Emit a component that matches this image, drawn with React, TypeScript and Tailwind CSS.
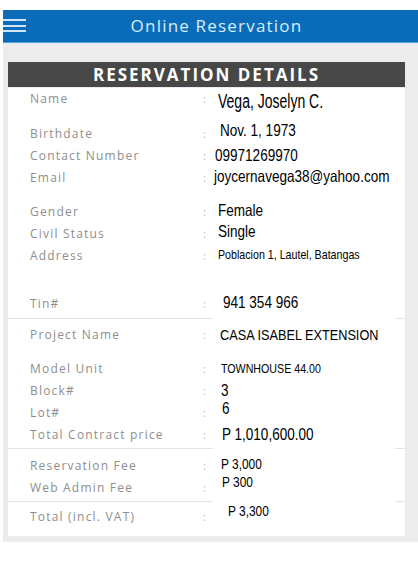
import React from "react";

type Row = {
  label: string;
  value: string;
  rowCls: string;
  valCls: string;
};

const Label = ({ children }: { children: React.ReactNode }) => (
  <div className="w-[195px] shrink-0 pl-[22px] text-[12px] tracking-[1.2px] text-[#8e8e8e] font-['Open_Sans',sans-serif] whitespace-nowrap">
    {children}
  </div>
);

const Colon = () => (
  <div className="w-[14px] shrink-0 text-[11px] text-[#b5b5b5] font-['Open_Sans',sans-serif]">:</div>
);

const Divider = ({ cls }: { cls: string }) => (
  <div className={"flex h-px " + cls}>
    <div className="w-[205px] bg-[#e4e4e4]" />
    <div className="flex-1" />
    <div className="w-[10px] bg-[#e4e4e4]" />
  </div>
);

function FieldRow({ r }: { r: Row }) {
  return (
    <div className={"flex items-center h-[22px] " + r.rowCls}>
      <Label>{r.label}</Label>
      <Colon />
      <div className={"whitespace-nowrap text-black font-['Liberation_Sans',Arial,sans-serif] " + r.valCls}>
        <span className="inline-block origin-left scale-x-[0.82]">{r.value}</span>
      </div>
    </div>
  );
}

export default function App() {
  const personal: Row[] = [
    { label: "Birthdate", value: "Nov. 1, 1973", rowCls: "mt-[13px]", valCls: "ml-[3px] text-[16.5px] mb-[8px]" },
    { label: "Contact Number", value: "09971269970", rowCls: "", valCls: "ml-[-2px] text-[16.5px] mb-[2px]" },
    { label: "Email", value: "joycernavega38@yahoo.com", rowCls: "", valCls: "ml-[-3px] text-[16.5px] mb-[4px]" },
    { label: "Gender", value: "Female", rowCls: "mt-[12px]", valCls: "ml-[1px] text-[16.5px] mb-[4px]" },
    { label: "Civil Status", value: "Single", rowCls: "", valCls: "ml-[1px] text-[16.5px] mb-[6px]" },
    { label: "Address", value: "Poblacion 1, Lautel, Batangas", rowCls: "", valCls: "ml-[1px] text-[13px] mb-[2px]" },
    { label: "Tin#", value: "941 354 966", rowCls: "mt-[26px]", valCls: "ml-[6px] text-[16.5px] mb-[4px]" },
  ];
  const project: Row[] = [
    { label: "Project Name", value: "CASA ISABEL EXTENSION", rowCls: "mt-[5px]", valCls: "ml-[3px] text-[15.5px]" },
    { label: "Model Unit", value: "TOWNHOUSE 44.00", rowCls: "mt-[12px]", valCls: "ml-[4px] text-[13px]" },
    { label: "Block#", value: "3", rowCls: "", valCls: "ml-[4px] text-[16.5px] mb-[2px]" },
    { label: "Lot#", value: "6", rowCls: "", valCls: "ml-[5px] text-[16.5px] mb-[10px]" },
    { label: "Total Contract price", value: "P 1,010,600.00", rowCls: "", valCls: "ml-[5px] text-[16.5px] mb-[2px]" },
  ];
  const fees: Row[] = [
    { label: "Reservation Fee", value: "P 3,000", rowCls: "mt-[6px]", valCls: "ml-[4px] text-[14.5px] mb-[2px]" },
    { label: "Web Admin Fee", value: "P 300", rowCls: "", valCls: "ml-[5px] text-[14.5px] mb-[10px]" },
  ];
  const total: Row = {
    label: "Total (incl. VAT)",
    value: "P 3,300",
    rowCls: "mt-[4px]",
    valCls: "ml-[11px] text-[14.5px] mb-[10px]",
  };

  return (
    <div className="w-[418px] h-[567px] bg-white pt-[10px] overflow-hidden">
      <div className="ml-[3px] h-[33px] bg-[#0a6cb9] border-b border-[#4da3dd] flex items-center relative">
        <div className="absolute left-0 top-[9px] w-[23px] flex flex-col gap-[3.5px]">
          <div className="h-[2px] bg-[#cfe6f6]" />
          <div className="h-[2px] bg-[#cfe6f6]" />
          <div className="h-[2px] bg-[#cfe6f6]" />
        </div>
        <div className="flex-1 text-center pl-[12px] text-[17px] tracking-[1.2px] text-[#d9ecfa] font-['Open_Sans',sans-serif]">
          Online Reservation
        </div>
      </div>
      <div className="ml-[3px] bg-[#ececec] pt-[19px] pl-[5px] pr-[13px] pb-[6px]">
        <div className="h-[25px] bg-[#474747] flex items-center justify-center text-white font-bold text-[17px] tracking-[2px] font-['Open_Sans',sans-serif]">
          RESERVATION DETAILS
        </div>
        <div className="bg-white pb-[8px]">
          <div className="flex items-center h-[22px] mt-px">
            <Label>Name</Label>
            <Colon />
            <div className="whitespace-nowrap text-black font-['Liberation_Sans',Arial,sans-serif] ml-[1px] -mb-[4px] text-[20px]">
              <span className="inline-block origin-left scale-x-[0.7]">Vega, Joselyn C.</span>
            </div>
          </div>
          {personal.map((r) => (
            <FieldRow key={r.label} r={r} />
          ))}
          <Divider cls="mt-[3px]" />
          {project.map((r) => (
            <FieldRow key={r.label} r={r} />
          ))}
          <Divider cls="mt-[2px]" />
          {fees.map((r) => (
            <FieldRow key={r.label} r={r} />
          ))}
          <Divider cls="mt-[2px]" />
          <FieldRow r={total} />
        </div>
      </div>
    </div>
  );
}
